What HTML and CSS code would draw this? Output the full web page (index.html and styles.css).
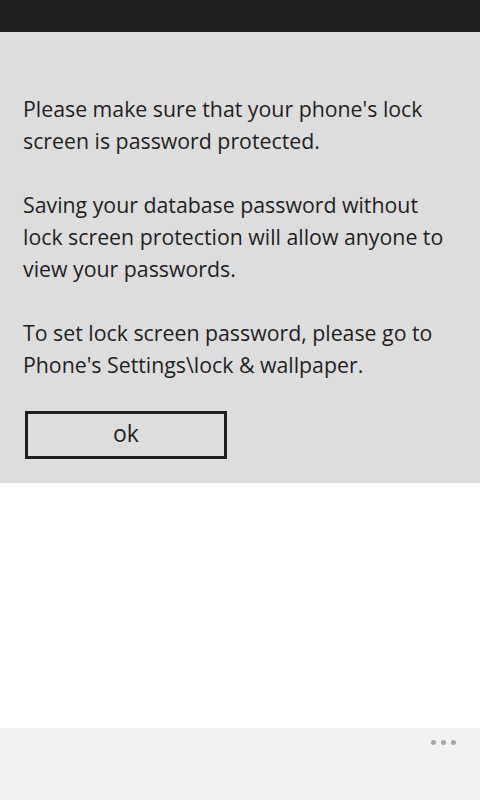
FILE: index.html
```html
<!DOCTYPE html>
<html>
<head>
<meta charset="utf-8">
<link rel="stylesheet" href="styles.css">
</head>
<body>
<div class="screen">
  <div class="statusbar"></div>
  <div class="dialog">
    <div class="message">
      <p class="para">Please make sure that your phone's lock<br>screen is password protected.</p>
      <p class="para">Saving your database password without<br>lock screen protection will allow anyone to<br>view your passwords.</p>
      <p class="para">To set lock screen password, please go to<br>Phone's Settings\lock &amp; wallpaper.</p>
    </div>
    <button class="ok">ok</button>
  </div>
  <div class="content"></div>
  <div class="appbar">
    <div class="dots"><span class="dot"></span><span class="dot"></span><span class="dot"></span></div>
  </div>
</div>
</body>
</html>
```
FILE: styles.css
```css
html, body {
  margin: 0;
  padding: 0;
  background: #ffffff;
}
.screen {
  width: 480px;
  height: 800px;
  display: flex;
  flex-direction: column;
  font-family: "Open Sans", "Noto Sans", sans-serif;
  color: #1f1f1f;
}
.statusbar {
  height: 32px;
  background: #1f1f1f;
  flex: none;
}
.dialog {
  background: #dddddd;
  padding: 61px 20px 24px 23px;
  flex: none;
  display: flex;
  flex-direction: column;
  align-items: flex-start;
}
.message {
  font-size: 21.3px;
  line-height: 32px;
}
.para {
  margin: 0 0 32px 0;
}
.para:last-child {
  margin-bottom: 0;
}
.ok {
  margin: 30px 0 0 2px;
  width: 202px;
  height: 48px;
  box-sizing: border-box;
  border: 3px solid #1f1f1f;
  background: transparent;
  font-family: "Open Sans", "Noto Sans", sans-serif;
  font-size: 23px;
  color: #1f1f1f;
  padding: 0 0 4px 0;
}
.content {
  flex: 1;
  background: #ffffff;
}
.appbar {
  height: 72px;
  background: #f2f2f2;
  flex: none;
  display: flex;
  justify-content: flex-end;
  align-items: flex-start;
}
.dots {
  display: flex;
  gap: 5px;
  margin: 12px 24px 0 0;
}
.dot {
  width: 5px;
  height: 5px;
  border-radius: 50%;
  background: #a6a6a6;
}
```
